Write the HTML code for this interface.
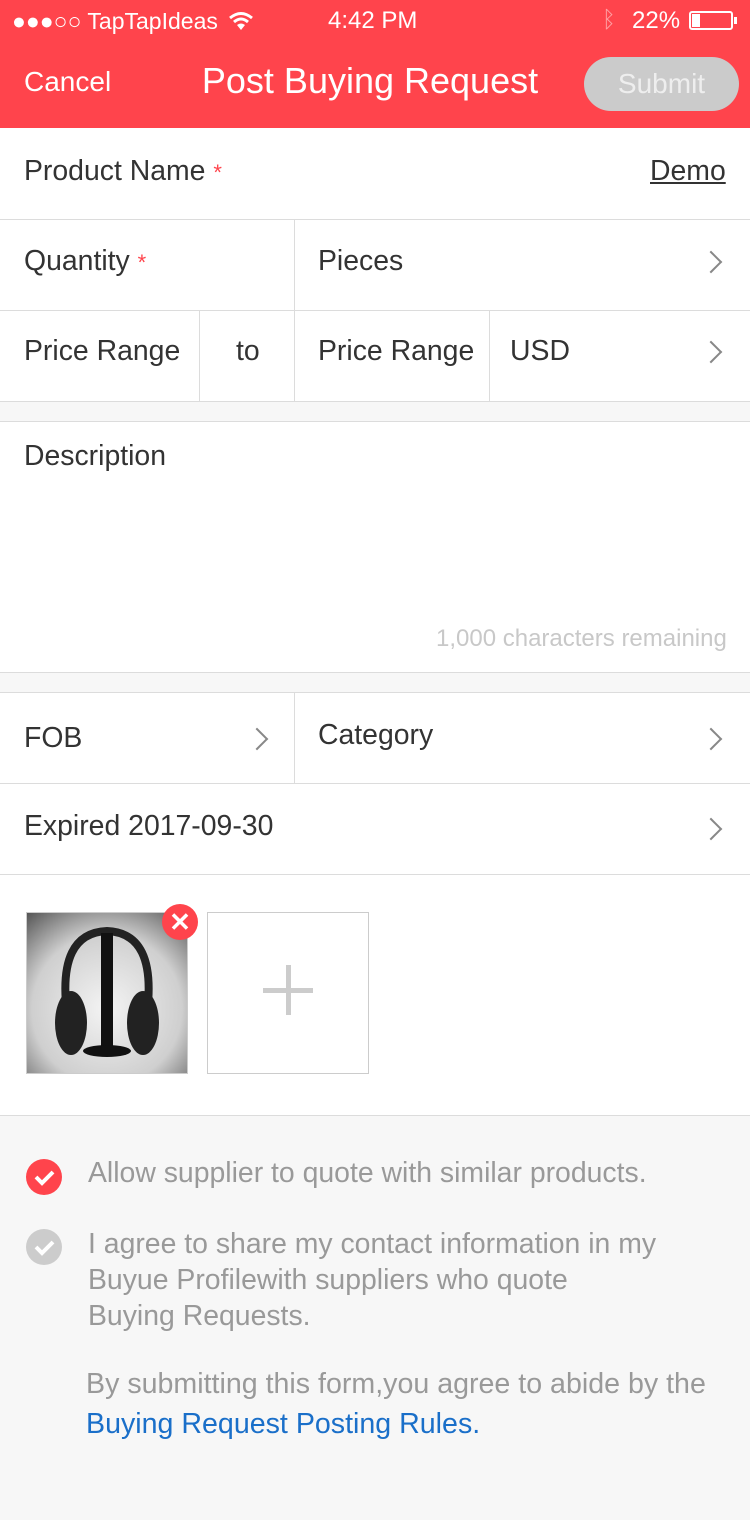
<!DOCTYPE html>
<html><head><meta charset="utf-8"><style>
*{margin:0;padding:0;box-sizing:border-box}
body{width:750px;height:1520px;position:relative;background:#f7f7f7;font-family:"Liberation Sans",Arial,sans-serif;overflow:hidden}
.a{position:absolute}
.hdr{left:0;top:0;width:750px;height:128px;background:#ff444c;color:#fff}
.w{background:#fff}
.t{font-size:28.4px;color:#333;white-space:nowrap}
.hl{height:1px;background:#dcdcdc;left:0;width:750px}
.vl{width:1px;background:#dcdcdc}
.chev{width:16px;height:16px;border-right:2.5px solid #888;border-top:2.5px solid #888;transform:rotate(45deg)}
.star{color:#ff444c;font-size:22px}
</style></head><body>
<div class="a hdr">
 <div class="a" style="left:12px;top:8px;font-size:23px">●●●○○ TapTapIdeas</div>
 <svg class="a" style="left:228px;top:11px" width="26" height="20" viewBox="0 0 26 20"><path d="M2 7 Q13 -2 24 7" stroke="#fff" stroke-width="3" fill="none"/><path d="M6 11 Q13 5 20 11" stroke="#fff" stroke-width="3" fill="none"/><path d="M13 19 L9 14 Q13 11 17 14Z" fill="#fff"/></svg>
 <div class="a" style="left:328px;top:7px;font-size:24px">4:42 PM</div>
 <div class="a" style="left:602px;top:6px;font-size:23px;color:#ffa0a4">ᛒ</div>
 <div class="a" style="left:632px;top:7px;font-size:24px">22%</div>
 <div class="a" style="left:689px;top:11px;width:44px;height:19px;border:2px solid #fff;border-radius:3px"><div style="width:8px;height:13px;margin:1px;background:#fff"></div></div>
 <div class="a" style="left:734px;top:17px;width:3px;height:7px;background:#fff"></div>
 <div class="a" style="left:24px;top:66px;font-size:28px">Cancel</div>
 <div class="a" style="left:0;width:740px;text-align:center;top:60px;font-size:36px">Post Buying Request</div>
 <div class="a" style="left:584px;top:57px;width:155px;height:54px;border-radius:27px;background:#cbcbcb;color:#eee;font-size:28px;text-align:center;line-height:54px">Submit</div>
</div>
<div class="a w" style="left:0;top:128px;width:750px;height:274px"></div>
<div class="a t" style="left:24px;top:155px">Product Name <span class="star">*</span></div>
<div class="a t" style="left:650px;top:155px;text-decoration:underline">Demo</div>
<div class="a hl" style="top:219px"></div>
<div class="a t" style="left:24px;top:245px">Quantity <span class="star">*</span></div>
<div class="a t" style="left:318px;top:245px">Pieces</div>
<div class="a chev" style="left:703px;top:254px"></div>
<div class="a hl" style="top:310px"></div>
<div class="a t" style="left:24px;top:335px">Price Range</div>
<div class="a t" style="left:236px;top:335px">to</div>
<div class="a t" style="left:318px;top:335px">Price Range</div>
<div class="a t" style="left:510px;top:335px">USD</div>
<div class="a chev" style="left:703px;top:344px"></div>
<div class="a vl" style="left:294px;top:220px;height:181px"></div>
<div class="a vl" style="left:199px;top:311px;height:90px"></div>
<div class="a vl" style="left:489px;top:311px;height:90px"></div>
<div class="a hl" style="top:401px"></div>
<div class="a w" style="left:0;top:421px;width:750px;height:251px"></div>
<div class="a hl" style="top:421px"></div>
<div class="a t" style="left:24px;top:440px">Description</div>
<div class="a" style="left:436px;top:625px;font-size:24px;color:#c8c8c8">1,000 characters remaining</div>
<div class="a hl" style="top:672px"></div>
<div class="a w" style="left:0;top:692px;width:750px;height:423px"></div>
<div class="a hl" style="top:692px"></div>
<div class="a t" style="left:24px;top:722px">FOB</div>
<div class="a chev" style="left:249px;top:731px"></div>
<div class="a vl" style="left:294px;top:693px;height:90px"></div>
<div class="a t" style="left:318px;top:719px">Category</div>
<div class="a chev" style="left:703px;top:731px"></div>
<div class="a hl" style="top:783px"></div>
<div class="a t" style="left:24px;top:810px">Expired 2017-09-30</div>
<div class="a chev" style="left:703px;top:821px"></div>
<div class="a hl" style="top:874px"></div>
<div class="a" style="left:26px;top:912px;width:162px;height:162px;border:1px solid #ccc;background:radial-gradient(circle at 50% 60%,#f4f4f4,#cfcfcf 60%,#555)">
 <svg width="160" height="160" viewBox="0 0 160 160"><path d="M40 100 Q30 20 80 18 Q130 20 120 100" stroke="#222" stroke-width="8" fill="none"/><rect x="74" y="20" width="12" height="115" fill="#111"/><ellipse cx="80" cy="138" rx="24" ry="6" fill="#111"/><ellipse cx="44" cy="110" rx="16" ry="32" fill="#222"/><ellipse cx="116" cy="110" rx="16" ry="32" fill="#222"/></svg>
</div>
<div class="a" style="left:162px;top:904px;width:36px;height:36px;border-radius:50%;background:#ff444c;color:#fff;font-size:26px;text-align:center;line-height:36px;font-weight:bold">✕</div>
<div class="a" style="left:207px;top:912px;width:162px;height:162px;border:1px solid #ccc;background:#fff"></div>
<div class="a" style="left:263px;top:988px;width:50px;height:5px;background:#ccc"></div>
<div class="a" style="left:286px;top:965px;width:5px;height:50px;background:#ccc"></div>
<div class="a hl" style="top:1115px"></div>
<div class="a" style="left:26px;top:1159px;width:36px;height:36px;border-radius:50%;background:#ff444c"><svg width="36" height="36"><path d="M10 18 L16 24 L27 13" stroke="#fff" stroke-width="4" fill="none"/></svg></div>
<div class="a" style="left:88px;top:1157px;font-size:28.4px;color:#999;white-space:nowrap">Allow supplier to quote with similar products.</div>
<div class="a" style="left:26px;top:1229px;width:36px;height:36px;border-radius:50%;background:#ccc"><svg width="36" height="36"><path d="M10 18 L16 24 L27 13" stroke="#fff" stroke-width="4" fill="none"/></svg></div>
<div class="a" style="left:88px;top:1226px;font-size:28.4px;color:#999;line-height:36px;white-space:nowrap">I agree to share my contact information in my<br>Buyue Profilewith suppliers who quote<br>Buying Requests.</div>
<div class="a" style="left:86px;top:1364px;font-size:28.6px;color:#999;line-height:40px;white-space:nowrap">By submitting this form,you agree to abide by the<br><span style="color:#1a6fc9">Buying Request Posting Rules.</span></div>
</body></html>
